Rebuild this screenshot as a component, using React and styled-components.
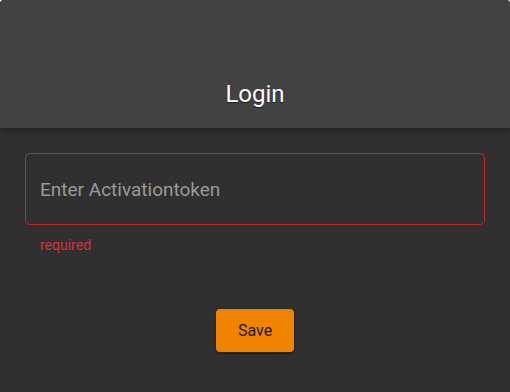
import React, { useState } from "react";
import styled, { createGlobalStyle } from "styled-components";

const GlobalStyle = createGlobalStyle`
  html, body {
    margin: 0;
    padding: 0;
    background: #ffffff;
  }
  body {
    font-family: Roboto, "Open Sans", sans-serif;
  }
`;

const Dialog = styled.div`
  width: 510px;
  height: 392px;
  background-color: #303030;
  border-radius: 4px 4px 0 0;
  overflow: hidden;
  display: flex;
  flex-direction: column;
`;

const Header = styled.div`
  height: 128px;
  background-color: #424242;
  display: flex;
  align-items: flex-end;
  justify-content: center;
  padding-bottom: 20px;
  box-sizing: border-box;
  box-shadow: 0 2px 6px rgba(0, 0, 0, 0.35);
  position: relative;
  z-index: 1;
  h2 {
    margin: 0;
    font-weight: 400;
    font-size: 24px;
    color: #ffffff;
    text-shadow: 0 1px 1px rgba(0, 0, 0, 0.6);
  }
`;

const Content = styled.div`
  flex: 1;
  display: flex;
  flex-direction: column;
  padding: 25px 25px 0;
`;

const Field = styled.div`
  display: flex;
  flex-direction: column;
  gap: 12px;
`;

const Input = styled.input`
  box-sizing: border-box;
  width: 100%;
  height: 72px;
  background: transparent;
  border: 1.5px solid ${(p) => (p.$invalid ? "#c3272b" : "#666")};
  border-radius: 5px;
  padding: 0 14px;
  font-family: Roboto, "Open Sans", sans-serif;
  font-size: 19px;
  color: #e0e0e0;
  outline: none;
  &::placeholder {
    color: #9a9a9a;
  }
`;

const ErrorText = styled.span`
  padding-left: 15px;
  font-size: 14px;
  color: #d5333a;
`;

const Actions = styled.div`
  display: flex;
  justify-content: center;
  padding-top: 55px;
`;

const SaveButton = styled.button`
  width: 80px;
  height: 45px;
  background-color: #f08400;
  border: 1px solid #2a2a2a;
  border-radius: 5px;
  font-family: Roboto, "Open Sans", sans-serif;
  font-size: 16px;
  color: #1a1a1a;
  cursor: pointer;
  box-shadow: 0 1px 2px rgba(0, 0, 0, 0.4);
`;

export default function App() {
  const [token, setToken] = useState("");
  return (
    <>
      <GlobalStyle />
      <Dialog>
        <Header>
          <h2>Login</h2>
        </Header>
        <Content>
          <Field>
            <Input
              $invalid={!token}
              placeholder="Enter Activationtoken"
              value={token}
              onChange={(e) => setToken(e.target.value)}
            />
            <ErrorText>{!token && "required"}</ErrorText>
          </Field>
          <Actions>
            <SaveButton>Save</SaveButton>
          </Actions>
        </Content>
      </Dialog>
    </>
  );
}
